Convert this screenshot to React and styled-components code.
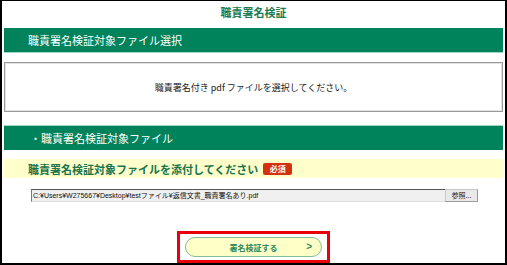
import React from 'react';
import styled, { createGlobalStyle } from 'styled-components';

const GlobalStyle = createGlobalStyle`
  html, body {
    margin: 0;
    padding: 0;
    background: #ffffff;
  }
  body {
    font-family: 'Noto Sans CJK JP', 'Noto Sans', sans-serif;
  }
`;

const Frame = styled.div`
  width: 507px;
  height: 265px;
  box-sizing: border-box;
  border-style: solid;
  border-color: #000000;
  border-width: 1px 2px 2px 2px;
  padding: 0 2px;
  display: flex;
  flex-direction: column;
  overflow: hidden;
`;

const Title = styled.div`
  height: 27px;
  display: flex;
  align-items: center;
  justify-content: center;
  padding-bottom: 6px;
  box-sizing: border-box;
  color: #1b7c52;
  font-size: 11px;
  font-weight: bold;
`;

const SectionBar = styled.div`
  height: 25px;
  box-sizing: border-box;
  background: #00835a;
  color: #ffffff;
  font-size: 11px;
  display: flex;
  align-items: center;
  padding-left: ${(p) => p.$indent}px;
  border-top: ${(p) => (p.$lineTop ? '1px solid #9fd6bf' : 'none')};
  border-bottom: ${(p) => (p.$lineTop ? 'none' : '1px solid #9fd6bf')};
  margin-top: ${(p) => p.$gap}px;
`;

const InfoBox = styled.div`
  margin-top: 9px;
  height: 50px;
  box-sizing: border-box;
  border: 1px solid #9a9a9a;
  box-shadow: inset 0 0 0 1px #e2e2e2;
  display: flex;
  align-items: center;
  justify-content: center;
  font-size: 9px;
  color: #222222;
`;

const RequiredRow = styled.div`
  margin-top: 9px;
  height: 19px;
  background: #ffffcc;
  display: flex;
  align-items: center;
  gap: 5px;
  padding-left: 24px;
  color: #17744c;
  font-size: 11px;
  font-weight: bold;
`;

const Badge = styled.span`
  display: inline-flex;
  align-items: center;
  justify-content: center;
  width: 29px;
  height: 12px;
  background: #d4320f;
  color: #ffffff;
  font-size: 8px;
  font-weight: bold;
  border-radius: 2px;
`;

const FileRow = styled.div`
  margin-top: 11px;
  display: flex;
  padding-left: 27px;
  height: 13px;
`;

const FilePath = styled.div`
  width: 414px;
  box-sizing: border-box;
  background: #f0f0f0;
  border-top: 1px solid #555555;
  border-left: 1px solid #777777;
  border-bottom: 1px solid #dddddd;
  font-family: 'Liberation Sans', 'Noto Sans CJK JP', sans-serif;
  font-size: 7px;
  line-height: 11px;
  color: #111111;
  padding-left: 1px;
  white-space: nowrap;
  overflow: hidden;
`;

const BrowseButton = styled.div`
  width: 33px;
  box-sizing: border-box;
  background: #e9e9e9;
  border: 1px solid #c8c8c8;
  border-right-color: #9a9a9a;
  border-bottom-color: #9a9a9a;
  font-size: 7px;
  line-height: 11px;
  text-align: center;
  color: #222222;
`;

const ActionArea = styled.div`
  flex: 1;
  display: flex;
  align-items: flex-end;
  justify-content: center;
`;

const Highlight = styled.div`
  width: 153px;
  height: 32px;
  box-sizing: border-box;
  border: 3px solid #e8000b;
  display: flex;
  align-items: center;
  justify-content: center;
`;

const PillButton = styled.div`
  position: relative;
  width: 137px;
  height: 20px;
  box-sizing: border-box;
  border: 1px solid #7fbf98;
  border-radius: 10px;
  background: #ffffc8;
  display: flex;
  align-items: center;
  justify-content: center;
  color: #2f8a5c;
  font-size: 8px;
  font-weight: bold;
`;

const Arrow = styled.span`
  position: absolute;
  right: 9px;
  top: 50%;
  transform: translateY(-52%);
  font-family: 'Liberation Sans', sans-serif;
  font-size: 10px;
  font-weight: bold;
  color: #2f8a5c;
`;

export default function App() {
  return (
    <>
      <GlobalStyle />
      <Frame>
        <Title>職責署名検証</Title>
        <SectionBar $indent={24} $gap={0}>
          職責署名検証対象ファイル選択
        </SectionBar>
        <InfoBox>職責署名付き pdf ファイルを選択してください。</InfoBox>
        <SectionBar $indent={26} $gap={13} $lineTop>
          ・職責署名検証対象ファイル
        </SectionBar>
        <RequiredRow>
          職責署名検証対象ファイルを添付してください
          <Badge>必須</Badge>
        </RequiredRow>
        <FileRow>
          <FilePath>C:¥Users¥W275667¥Desktop¥testファイル¥返信文書_職責署名あり.pdf</FilePath>
          <BrowseButton>参照...</BrowseButton>
        </FileRow>
        <ActionArea>
          <Highlight>
            <PillButton>
              署名検証する
              <Arrow>&gt;</Arrow>
            </PillButton>
          </Highlight>
        </ActionArea>
      </Frame>
    </>
  );
}
